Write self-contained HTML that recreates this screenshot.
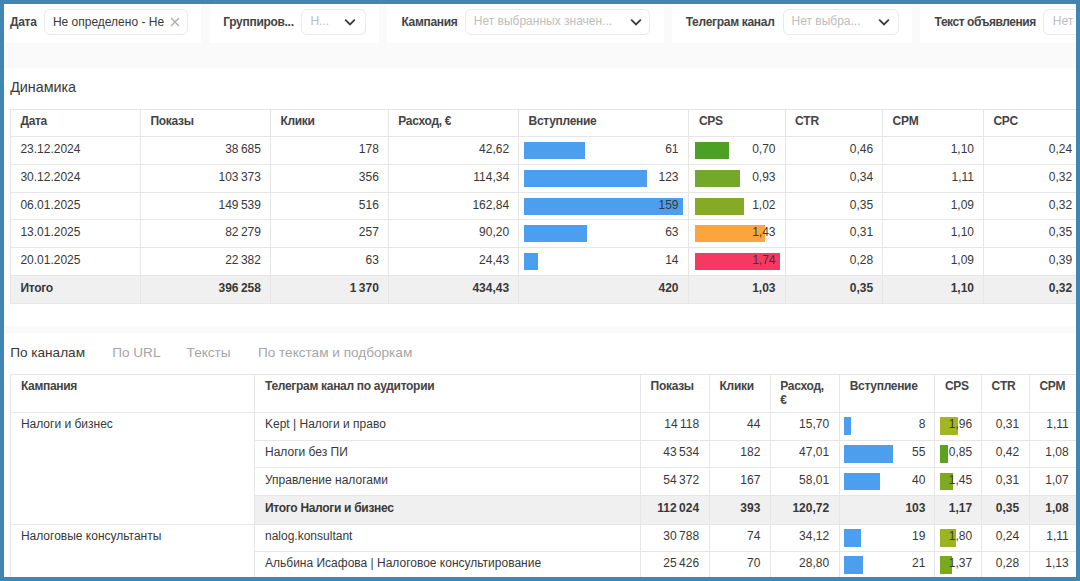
<!DOCTYPE html>
<html><head><meta charset="utf-8">
<style>
html,body{margin:0;padding:0;}
body{width:1080px;height:581px;overflow:hidden;background:#3f86b3;position:relative;font-family:"Liberation Sans",sans-serif;}
#in{position:absolute;left:0;top:0;width:1080px;height:581px;overflow:hidden;background:#fff;clip-path:inset(4px 4px 4px 4px);}
.t{position:absolute;white-space:nowrap;}
.r{position:absolute;}
svg.r{display:block;}
</style></head><body>
<div id="in">
<div class="r" style="left:0.00px;top:0.00px;width:1080.00px;height:68.00px;background:#fafafa;"></div>
<div class="r" style="left:0.00px;top:0.00px;width:201.00px;height:42.60px;background:#ffffff;"></div>
<div class="r" style="left:209.50px;top:0.00px;width:169.00px;height:42.60px;background:#ffffff;"></div>
<div class="r" style="left:387.00px;top:0.00px;width:277.30px;height:42.60px;background:#ffffff;"></div>
<div class="r" style="left:671.50px;top:0.00px;width:240.50px;height:42.60px;background:#ffffff;"></div>
<div class="r" style="left:920.00px;top:0.00px;width:160.00px;height:42.60px;background:#ffffff;"></div>
<div class="t " style="top:15.04px;font-size:12px;line-height:14px;font-weight:bold;letter-spacing:-0.3px;color:#444444;left:10.00px;">Дата</div>
<div class="r" style="left:44.30px;top:9.00px;width:143.60px;height:25.60px;background:#fff;border:1px solid #e9e9e9;border-radius:6px;box-sizing:border-box;"></div>
<div class="t " style="top:15.04px;font-size:12px;line-height:14px;color:#383838;left:52.90px;">Не определено - Не</div>
<div class="t " style="top:15.04px;font-size:12px;line-height:14px;font-weight:bold;letter-spacing:-0.3px;color:#444444;left:223.20px;">Группиров...</div>
<div class="r" style="left:301.40px;top:9.00px;width:64.30px;height:25.60px;background:#fff;border:1px solid #e9e9e9;border-radius:6px;box-sizing:border-box;"></div>
<div class="t " style="top:14.14px;font-size:12px;line-height:14px;color:#bdbdbd;left:310.40px;">Н...</div>
<div class="t " style="top:15.04px;font-size:12px;line-height:14px;font-weight:bold;letter-spacing:-0.3px;color:#444444;left:401.40px;">Кампания</div>
<div class="r" style="left:464.90px;top:9.00px;width:185.60px;height:25.60px;background:#fff;border:1px solid #e9e9e9;border-radius:6px;box-sizing:border-box;"></div>
<div class="t " style="top:14.14px;font-size:12px;line-height:14px;color:#bdbdbd;left:473.80px;">Нет выбранных значен...</div>
<div class="t " style="top:15.04px;font-size:12px;line-height:14px;font-weight:bold;letter-spacing:-0.3px;color:#444444;left:685.70px;">Телеграм канал</div>
<div class="r" style="left:782.60px;top:9.00px;width:116.10px;height:25.60px;background:#fff;border:1px solid #e9e9e9;border-radius:6px;box-sizing:border-box;"></div>
<div class="t " style="top:14.14px;font-size:12px;line-height:14px;color:#bdbdbd;left:791.50px;">Нет выбра...</div>
<div class="t " style="top:15.04px;font-size:12px;line-height:14px;font-weight:bold;letter-spacing:-0.3px;color:#444444;left:934.60px;letter-spacing:-0.45px;">Текст объявления</div>
<div class="r" style="left:1042.60px;top:9.00px;width:77.70px;height:25.60px;background:#fff;border:1px solid #e9e9e9;border-radius:6px;box-sizing:border-box;"></div>
<div class="t " style="top:14.14px;font-size:12px;line-height:14px;color:#bdbdbd;left:1052.80px;">Нет выбра...</div>
<svg class="r" style="left:169.1px;top:16.1px" width="12" height="12" viewBox="0 0 12 12"><path d="M2 2 L10 10 M10 2 L2 10" fill="none" stroke="#ababab" stroke-width="1.3"/></svg>
<svg class="r" style="left:344px;top:15.8px" width="12" height="12" viewBox="0 0 12 12"><path d="M1.2 3.6 L6 8.4 L10.8 3.6" fill="none" stroke="#3a3a3a" stroke-width="1.8"/></svg>
<svg class="r" style="left:629.7px;top:15.8px" width="12" height="12" viewBox="0 0 12 12"><path d="M1.2 3.6 L6 8.4 L10.8 3.6" fill="none" stroke="#3a3a3a" stroke-width="1.8"/></svg>
<svg class="r" style="left:878.4px;top:15.8px" width="12" height="12" viewBox="0 0 12 12"><path d="M1.2 3.6 L6 8.4 L10.8 3.6" fill="none" stroke="#3a3a3a" stroke-width="1.8"/></svg>
<div class="t " style="top:79.45px;font-size:14.3px;line-height:17px;color:#383838;left:10.20px;">Динамика</div>
<div class="r" style="left:10.40px;top:275.20px;width:1089.60px;height:28.00px;background:#f0f0f0;"></div>
<div class="r" style="left:10.40px;top:109.00px;width:1089.60px;height:1.00px;background:#e6e6e6;"></div>
<div class="r" style="left:10.40px;top:136.00px;width:1089.60px;height:1.00px;background:#e6e6e6;"></div>
<div class="r" style="left:10.40px;top:164.00px;width:1089.60px;height:1.00px;background:#e6e6e6;"></div>
<div class="r" style="left:10.40px;top:191.90px;width:1089.60px;height:1.00px;background:#e6e6e6;"></div>
<div class="r" style="left:10.40px;top:219.00px;width:1089.60px;height:1.00px;background:#e6e6e6;"></div>
<div class="r" style="left:10.40px;top:246.80px;width:1089.60px;height:1.00px;background:#e6e6e6;"></div>
<div class="r" style="left:10.40px;top:274.70px;width:1089.60px;height:1.00px;background:#e6e6e6;"></div>
<div class="r" style="left:10.40px;top:302.70px;width:1089.60px;height:1.00px;background:#e6e6e6;"></div>
<div class="r" style="left:9.90px;top:109.50px;width:1.00px;height:193.70px;background:#e6e6e6;"></div>
<div class="r" style="left:140.00px;top:109.50px;width:1.00px;height:193.70px;background:#e6e6e6;"></div>
<div class="r" style="left:269.90px;top:109.50px;width:1.00px;height:193.70px;background:#e6e6e6;"></div>
<div class="r" style="left:387.80px;top:109.50px;width:1.00px;height:193.70px;background:#e6e6e6;"></div>
<div class="r" style="left:518.10px;top:109.50px;width:1.00px;height:193.70px;background:#e6e6e6;"></div>
<div class="r" style="left:688.40px;top:109.50px;width:1.00px;height:193.70px;background:#e6e6e6;"></div>
<div class="r" style="left:784.50px;top:109.50px;width:1.00px;height:193.70px;background:#e6e6e6;"></div>
<div class="r" style="left:882.10px;top:109.50px;width:1.00px;height:193.70px;background:#e6e6e6;"></div>
<div class="r" style="left:983.00px;top:109.50px;width:1.00px;height:193.70px;background:#e6e6e6;"></div>
<div class="r" style="left:1082.00px;top:109.50px;width:1.00px;height:193.70px;background:#e6e6e6;"></div>
<div class="t " style="top:113.54px;font-size:12px;line-height:14px;font-weight:bold;letter-spacing:-0.3px;color:#444444;left:20.40px;">Дата</div>
<div class="t " style="top:113.54px;font-size:12px;line-height:14px;font-weight:bold;letter-spacing:-0.3px;color:#444444;left:150.50px;">Показы</div>
<div class="t " style="top:113.54px;font-size:12px;line-height:14px;font-weight:bold;letter-spacing:-0.3px;color:#444444;left:280.40px;">Клики</div>
<div class="t " style="top:113.54px;font-size:12px;line-height:14px;font-weight:bold;letter-spacing:-0.3px;color:#444444;left:398.30px;">Расход, €</div>
<div class="t " style="top:113.54px;font-size:12px;line-height:14px;font-weight:bold;letter-spacing:-0.3px;color:#444444;left:528.60px;">Вступление</div>
<div class="t " style="top:113.54px;font-size:12px;line-height:14px;font-weight:bold;letter-spacing:-0.3px;color:#444444;left:698.90px;">CPS</div>
<div class="t " style="top:113.54px;font-size:12px;line-height:14px;font-weight:bold;letter-spacing:-0.3px;color:#444444;left:795.00px;">CTR</div>
<div class="t " style="top:113.54px;font-size:12px;line-height:14px;font-weight:bold;letter-spacing:-0.3px;color:#444444;left:892.60px;">CPM</div>
<div class="t " style="top:113.54px;font-size:12px;line-height:14px;font-weight:bold;letter-spacing:-0.3px;color:#444444;left:993.50px;">CPC</div>
<div class="r" style="left:524.20px;top:141.70px;width:61.00px;height:17.20px;background:#4c9fee;"></div>
<div class="r" style="left:694.50px;top:141.70px;width:34.30px;height:17.20px;background:#4ca024;"></div>
<div class="t " style="top:142.04px;font-size:12px;line-height:14px;color:#383838;left:20.40px;">23.12.2024</div>
<div class="t " style="top:142.04px;font-size:12px;line-height:14px;color:#383838;right:819.10px;text-align:right;">38 685</div>
<div class="t " style="top:142.04px;font-size:12px;line-height:14px;color:#383838;right:701.20px;text-align:right;">178</div>
<div class="t " style="top:142.04px;font-size:12px;line-height:14px;color:#383838;right:570.90px;text-align:right;">42,62</div>
<div class="t " style="top:142.04px;font-size:12px;line-height:14px;color:#383838;right:401.50px;text-align:right;">61</div>
<div class="t " style="top:142.04px;font-size:12px;line-height:14px;color:#383838;right:304.50px;text-align:right;">0,70</div>
<div class="t " style="top:142.04px;font-size:12px;line-height:14px;color:#383838;right:206.90px;text-align:right;">0,46</div>
<div class="t " style="top:142.04px;font-size:12px;line-height:14px;color:#383838;right:106.00px;text-align:right;">1,10</div>
<div class="t " style="top:142.04px;font-size:12px;line-height:14px;color:#383838;right:7.90px;text-align:right;">0,24</div>
<div class="r" style="left:524.20px;top:169.70px;width:123.00px;height:17.20px;background:#4c9fee;"></div>
<div class="r" style="left:694.50px;top:169.70px;width:45.57px;height:17.20px;background:#74a82a;"></div>
<div class="t " style="top:170.04px;font-size:12px;line-height:14px;color:#383838;left:20.40px;">30.12.2024</div>
<div class="t " style="top:170.04px;font-size:12px;line-height:14px;color:#383838;right:819.10px;text-align:right;">103 373</div>
<div class="t " style="top:170.04px;font-size:12px;line-height:14px;color:#383838;right:701.20px;text-align:right;">356</div>
<div class="t " style="top:170.04px;font-size:12px;line-height:14px;color:#383838;right:570.90px;text-align:right;">114,34</div>
<div class="t " style="top:170.04px;font-size:12px;line-height:14px;color:#383838;right:401.50px;text-align:right;">123</div>
<div class="t " style="top:170.04px;font-size:12px;line-height:14px;color:#383838;right:304.50px;text-align:right;">0,93</div>
<div class="t " style="top:170.04px;font-size:12px;line-height:14px;color:#383838;right:206.90px;text-align:right;">0,34</div>
<div class="t " style="top:170.04px;font-size:12px;line-height:14px;color:#383838;right:106.00px;text-align:right;">1,11</div>
<div class="t " style="top:170.04px;font-size:12px;line-height:14px;color:#383838;right:7.90px;text-align:right;">0,32</div>
<div class="r" style="left:524.20px;top:197.60px;width:159.00px;height:17.20px;background:#4c9fee;"></div>
<div class="r" style="left:694.50px;top:197.60px;width:49.98px;height:17.20px;background:#84aa26;"></div>
<div class="t " style="top:197.94px;font-size:12px;line-height:14px;color:#383838;left:20.40px;">06.01.2025</div>
<div class="t " style="top:197.94px;font-size:12px;line-height:14px;color:#383838;right:819.10px;text-align:right;">149 539</div>
<div class="t " style="top:197.94px;font-size:12px;line-height:14px;color:#383838;right:701.20px;text-align:right;">516</div>
<div class="t " style="top:197.94px;font-size:12px;line-height:14px;color:#383838;right:570.90px;text-align:right;">162,84</div>
<div class="t " style="top:197.94px;font-size:12px;line-height:14px;color:#383838;right:401.50px;text-align:right;">159</div>
<div class="t " style="top:197.94px;font-size:12px;line-height:14px;color:#383838;right:304.50px;text-align:right;">1,02</div>
<div class="t " style="top:197.94px;font-size:12px;line-height:14px;color:#383838;right:206.90px;text-align:right;">0,35</div>
<div class="t " style="top:197.94px;font-size:12px;line-height:14px;color:#383838;right:106.00px;text-align:right;">1,09</div>
<div class="t " style="top:197.94px;font-size:12px;line-height:14px;color:#383838;right:7.90px;text-align:right;">0,32</div>
<div class="r" style="left:524.20px;top:224.70px;width:63.00px;height:17.20px;background:#4c9fee;"></div>
<div class="r" style="left:694.50px;top:224.70px;width:70.07px;height:17.20px;background:#fca53e;"></div>
<div class="t " style="top:225.04px;font-size:12px;line-height:14px;color:#383838;left:20.40px;">13.01.2025</div>
<div class="t " style="top:225.04px;font-size:12px;line-height:14px;color:#383838;right:819.10px;text-align:right;">82 279</div>
<div class="t " style="top:225.04px;font-size:12px;line-height:14px;color:#383838;right:701.20px;text-align:right;">257</div>
<div class="t " style="top:225.04px;font-size:12px;line-height:14px;color:#383838;right:570.90px;text-align:right;">90,20</div>
<div class="t " style="top:225.04px;font-size:12px;line-height:14px;color:#383838;right:401.50px;text-align:right;">63</div>
<div class="t " style="top:225.04px;font-size:12px;line-height:14px;color:#383838;right:304.50px;text-align:right;">1,43</div>
<div class="t " style="top:225.04px;font-size:12px;line-height:14px;color:#383838;right:206.90px;text-align:right;">0,31</div>
<div class="t " style="top:225.04px;font-size:12px;line-height:14px;color:#383838;right:106.00px;text-align:right;">1,10</div>
<div class="t " style="top:225.04px;font-size:12px;line-height:14px;color:#383838;right:7.90px;text-align:right;">0,35</div>
<div class="r" style="left:524.20px;top:252.50px;width:14.00px;height:17.20px;background:#4c9fee;"></div>
<div class="r" style="left:694.50px;top:252.50px;width:85.26px;height:17.20px;background:#f73862;"></div>
<div class="t " style="top:252.84px;font-size:12px;line-height:14px;color:#383838;left:20.40px;">20.01.2025</div>
<div class="t " style="top:252.84px;font-size:12px;line-height:14px;color:#383838;right:819.10px;text-align:right;">22 382</div>
<div class="t " style="top:252.84px;font-size:12px;line-height:14px;color:#383838;right:701.20px;text-align:right;">63</div>
<div class="t " style="top:252.84px;font-size:12px;line-height:14px;color:#383838;right:570.90px;text-align:right;">24,43</div>
<div class="t " style="top:252.84px;font-size:12px;line-height:14px;color:#383838;right:401.50px;text-align:right;">14</div>
<div class="t " style="top:252.84px;font-size:12px;line-height:14px;color:#383838;right:304.50px;text-align:right;">1,74</div>
<div class="t " style="top:252.84px;font-size:12px;line-height:14px;color:#383838;right:206.90px;text-align:right;">0,28</div>
<div class="t " style="top:252.84px;font-size:12px;line-height:14px;color:#383838;right:106.00px;text-align:right;">1,09</div>
<div class="t " style="top:252.84px;font-size:12px;line-height:14px;color:#383838;right:7.90px;text-align:right;">0,39</div>
<div class="t " style="top:280.74px;font-size:12px;line-height:14px;font-weight:bold;letter-spacing:-0.3px;color:#383838;left:20.40px;">Итого</div>
<div class="t " style="top:280.74px;font-size:12px;line-height:14px;font-weight:bold;color:#383838;right:819.10px;text-align:right;">396 258</div>
<div class="t " style="top:280.74px;font-size:12px;line-height:14px;font-weight:bold;color:#383838;right:701.20px;text-align:right;">1 370</div>
<div class="t " style="top:280.74px;font-size:12px;line-height:14px;font-weight:bold;color:#383838;right:570.90px;text-align:right;">434,43</div>
<div class="t " style="top:280.74px;font-size:12px;line-height:14px;font-weight:bold;color:#383838;right:401.50px;text-align:right;">420</div>
<div class="t " style="top:280.74px;font-size:12px;line-height:14px;font-weight:bold;color:#383838;right:304.50px;text-align:right;">1,03</div>
<div class="t " style="top:280.74px;font-size:12px;line-height:14px;font-weight:bold;color:#383838;right:206.90px;text-align:right;">0,35</div>
<div class="t " style="top:280.74px;font-size:12px;line-height:14px;font-weight:bold;color:#383838;right:106.00px;text-align:right;">1,10</div>
<div class="t " style="top:280.74px;font-size:12px;line-height:14px;font-weight:bold;color:#383838;right:7.90px;text-align:right;">0,32</div>
<div class="r" style="left:0.00px;top:325.70px;width:1080.00px;height:7.50px;background:#fafafa;"></div>
<div class="t " style="top:344.69px;font-size:13.6px;line-height:16px;color:#383838;left:10.20px;">По каналам</div>
<div class="t " style="top:344.69px;font-size:13.6px;line-height:16px;color:#a6a6a6;left:112.20px;">По URL</div>
<div class="t " style="top:344.69px;font-size:13.6px;line-height:16px;color:#a6a6a6;left:186.60px;">Тексты</div>
<div class="t " style="top:344.69px;font-size:13.6px;line-height:16px;color:#a6a6a6;left:257.90px;">По текстам и подборкам</div>
<div class="r" style="left:254.50px;top:495.30px;width:845.50px;height:29.00px;background:#f0f0f0;"></div>
<div class="r" style="left:10.40px;top:374.00px;width:1089.60px;height:1.00px;background:#e6e6e6;"></div>
<div class="r" style="left:10.40px;top:411.50px;width:1089.60px;height:1.00px;background:#e6e6e6;"></div>
<div class="r" style="left:254.50px;top:439.50px;width:845.50px;height:1.00px;background:#e6e6e6;"></div>
<div class="r" style="left:254.50px;top:467.00px;width:845.50px;height:1.00px;background:#e6e6e6;"></div>
<div class="r" style="left:254.50px;top:494.80px;width:845.50px;height:1.00px;background:#e6e6e6;"></div>
<div class="r" style="left:10.40px;top:523.80px;width:1089.60px;height:1.00px;background:#e6e6e6;"></div>
<div class="r" style="left:254.50px;top:551.10px;width:845.50px;height:1.00px;background:#e6e6e6;"></div>
<div class="r" style="left:254.50px;top:578.50px;width:845.50px;height:1.00px;background:#e6e6e6;"></div>
<div class="r" style="left:9.90px;top:374.50px;width:1.00px;height:225.50px;background:#e6e6e6;"></div>
<div class="r" style="left:254.00px;top:374.50px;width:1.00px;height:225.50px;background:#e6e6e6;"></div>
<div class="r" style="left:640.10px;top:374.50px;width:1.00px;height:225.50px;background:#e6e6e6;"></div>
<div class="r" style="left:708.90px;top:374.50px;width:1.00px;height:225.50px;background:#e6e6e6;"></div>
<div class="r" style="left:770.10px;top:374.50px;width:1.00px;height:225.50px;background:#e6e6e6;"></div>
<div class="r" style="left:838.90px;top:374.50px;width:1.00px;height:225.50px;background:#e6e6e6;"></div>
<div class="r" style="left:934.40px;top:374.50px;width:1.00px;height:225.50px;background:#e6e6e6;"></div>
<div class="r" style="left:981.10px;top:374.50px;width:1.00px;height:225.50px;background:#e6e6e6;"></div>
<div class="r" style="left:1029.00px;top:374.50px;width:1.00px;height:225.50px;background:#e6e6e6;"></div>
<div class="r" style="left:1078.50px;top:374.50px;width:1.00px;height:225.50px;background:#e6e6e6;"></div>
<div class="t " style="top:378.74px;font-size:12px;line-height:14px;font-weight:bold;letter-spacing:-0.3px;color:#444444;left:20.90px;">Кампания</div>
<div class="t " style="top:378.74px;font-size:12px;line-height:14px;font-weight:bold;letter-spacing:-0.3px;color:#444444;left:265.00px;">Телеграм канал по аудитории</div>
<div class="t " style="top:378.74px;font-size:12px;line-height:14px;font-weight:bold;letter-spacing:-0.3px;color:#444444;left:650.60px;">Показы</div>
<div class="t " style="top:378.74px;font-size:12px;line-height:14px;font-weight:bold;letter-spacing:-0.3px;color:#444444;left:719.60px;">Клики</div>
<div class="t " style="top:378.74px;font-size:12px;line-height:14px;font-weight:bold;letter-spacing:-0.3px;color:#444444;left:780.30px;">Расход,</div>
<div class="t " style="top:378.74px;font-size:12px;line-height:14px;font-weight:bold;letter-spacing:-0.3px;color:#444444;left:849.70px;">Вступление</div>
<div class="t " style="top:378.74px;font-size:12px;line-height:14px;font-weight:bold;letter-spacing:-0.3px;color:#444444;left:945.00px;">CPS</div>
<div class="t " style="top:378.74px;font-size:12px;line-height:14px;font-weight:bold;letter-spacing:-0.3px;color:#444444;left:991.60px;">CTR</div>
<div class="t " style="top:378.74px;font-size:12px;line-height:14px;font-weight:bold;letter-spacing:-0.3px;color:#444444;left:1039.50px;">CPM</div>
<div class="t " style="top:392.84px;font-size:12px;line-height:14px;font-weight:bold;letter-spacing:-0.3px;color:#444444;left:780.30px;">€</div>
<div class="t " style="top:417.04px;font-size:12px;line-height:14px;color:#383838;left:20.90px;">Налоги и бизнес</div>
<div class="t " style="top:528.54px;font-size:12px;line-height:14px;color:#383838;left:20.90px;">Налоговые консультанты</div>
<div class="r" style="left:844.40px;top:417.00px;width:7.04px;height:17.50px;background:#4c9fee;"></div>
<div class="r" style="left:940.00px;top:417.00px;width:17.64px;height:17.50px;background:#a3b524;"></div>
<div class="t " style="top:417.04px;font-size:12px;line-height:14px;color:#383838;left:265.00px;">Kept | Налоги и право</div>
<div class="t " style="top:417.04px;font-size:12px;line-height:14px;color:#383838;right:380.90px;text-align:right;">14 118</div>
<div class="t " style="top:417.04px;font-size:12px;line-height:14px;color:#383838;right:319.70px;text-align:right;">44</div>
<div class="t " style="top:417.04px;font-size:12px;line-height:14px;color:#383838;right:250.90px;text-align:right;">15,70</div>
<div class="t " style="top:417.04px;font-size:12px;line-height:14px;color:#383838;right:154.60px;text-align:right;">8</div>
<div class="t " style="top:417.04px;font-size:12px;line-height:14px;color:#383838;right:107.90px;text-align:right;">1,96</div>
<div class="t " style="top:417.04px;font-size:12px;line-height:14px;color:#383838;right:60.80px;text-align:right;">0,31</div>
<div class="t " style="top:417.04px;font-size:12px;line-height:14px;color:#383838;right:11.30px;text-align:right;">1,11</div>
<div class="r" style="left:844.40px;top:445.00px;width:48.40px;height:17.50px;background:#4c9fee;"></div>
<div class="r" style="left:940.00px;top:445.00px;width:7.65px;height:17.50px;background:#5ba21e;"></div>
<div class="t " style="top:444.84px;font-size:12px;line-height:14px;color:#383838;left:265.00px;">Налоги без ПИ</div>
<div class="t " style="top:444.84px;font-size:12px;line-height:14px;color:#383838;right:380.90px;text-align:right;">43 534</div>
<div class="t " style="top:444.84px;font-size:12px;line-height:14px;color:#383838;right:319.70px;text-align:right;">182</div>
<div class="t " style="top:444.84px;font-size:12px;line-height:14px;color:#383838;right:250.90px;text-align:right;">47,01</div>
<div class="t " style="top:444.84px;font-size:12px;line-height:14px;color:#383838;right:154.60px;text-align:right;">55</div>
<div class="t " style="top:444.84px;font-size:12px;line-height:14px;color:#383838;right:107.90px;text-align:right;">0,85</div>
<div class="t " style="top:444.84px;font-size:12px;line-height:14px;color:#383838;right:60.80px;text-align:right;">0,42</div>
<div class="t " style="top:444.84px;font-size:12px;line-height:14px;color:#383838;right:11.30px;text-align:right;">1,08</div>
<div class="r" style="left:844.40px;top:472.50px;width:35.20px;height:17.50px;background:#4c9fee;"></div>
<div class="r" style="left:940.00px;top:472.50px;width:13.05px;height:17.50px;background:#7fa91f;"></div>
<div class="t " style="top:472.74px;font-size:12px;line-height:14px;color:#383838;left:265.00px;">Управление налогами</div>
<div class="t " style="top:472.74px;font-size:12px;line-height:14px;color:#383838;right:380.90px;text-align:right;">54 372</div>
<div class="t " style="top:472.74px;font-size:12px;line-height:14px;color:#383838;right:319.70px;text-align:right;">167</div>
<div class="t " style="top:472.74px;font-size:12px;line-height:14px;color:#383838;right:250.90px;text-align:right;">58,01</div>
<div class="t " style="top:472.74px;font-size:12px;line-height:14px;color:#383838;right:154.60px;text-align:right;">40</div>
<div class="t " style="top:472.74px;font-size:12px;line-height:14px;color:#383838;right:107.90px;text-align:right;">1,45</div>
<div class="t " style="top:472.74px;font-size:12px;line-height:14px;color:#383838;right:60.80px;text-align:right;">0,31</div>
<div class="t " style="top:472.74px;font-size:12px;line-height:14px;color:#383838;right:11.30px;text-align:right;">1,07</div>
<div class="t " style="top:500.74px;font-size:12px;line-height:14px;font-weight:bold;letter-spacing:-0.3px;color:#383838;left:265.00px;">Итого Налоги и бизнес</div>
<div class="t " style="top:500.74px;font-size:12px;line-height:14px;font-weight:bold;color:#383838;right:380.90px;text-align:right;">112 024</div>
<div class="t " style="top:500.74px;font-size:12px;line-height:14px;font-weight:bold;color:#383838;right:319.70px;text-align:right;">393</div>
<div class="t " style="top:500.74px;font-size:12px;line-height:14px;font-weight:bold;color:#383838;right:250.90px;text-align:right;">120,72</div>
<div class="t " style="top:500.74px;font-size:12px;line-height:14px;font-weight:bold;color:#383838;right:154.60px;text-align:right;">103</div>
<div class="t " style="top:500.74px;font-size:12px;line-height:14px;font-weight:bold;color:#383838;right:107.90px;text-align:right;">1,17</div>
<div class="t " style="top:500.74px;font-size:12px;line-height:14px;font-weight:bold;color:#383838;right:60.80px;text-align:right;">0,35</div>
<div class="t " style="top:500.74px;font-size:12px;line-height:14px;font-weight:bold;color:#383838;right:11.30px;text-align:right;">1,08</div>
<div class="r" style="left:844.40px;top:529.00px;width:16.72px;height:17.50px;background:#4c9fee;"></div>
<div class="r" style="left:940.00px;top:529.00px;width:16.20px;height:17.50px;background:#9cb324;"></div>
<div class="t " style="top:528.54px;font-size:12px;line-height:14px;color:#383838;left:265.00px;">nalog.konsultant</div>
<div class="t " style="top:528.54px;font-size:12px;line-height:14px;color:#383838;right:380.90px;text-align:right;">30 788</div>
<div class="t " style="top:528.54px;font-size:12px;line-height:14px;color:#383838;right:319.70px;text-align:right;">74</div>
<div class="t " style="top:528.54px;font-size:12px;line-height:14px;color:#383838;right:250.90px;text-align:right;">34,12</div>
<div class="t " style="top:528.54px;font-size:12px;line-height:14px;color:#383838;right:154.60px;text-align:right;">19</div>
<div class="t " style="top:528.54px;font-size:12px;line-height:14px;color:#383838;right:107.90px;text-align:right;">1,80</div>
<div class="t " style="top:528.54px;font-size:12px;line-height:14px;color:#383838;right:60.80px;text-align:right;">0,24</div>
<div class="t " style="top:528.54px;font-size:12px;line-height:14px;color:#383838;right:11.30px;text-align:right;">1,11</div>
<div class="r" style="left:844.40px;top:556.30px;width:18.48px;height:17.50px;background:#4c9fee;"></div>
<div class="r" style="left:940.00px;top:556.30px;width:12.33px;height:17.50px;background:#7ba91e;"></div>
<div class="t " style="top:556.34px;font-size:12px;line-height:14px;color:#383838;left:265.00px;">Альбина Исафова | Налоговое консультирование</div>
<div class="t " style="top:556.34px;font-size:12px;line-height:14px;color:#383838;right:380.90px;text-align:right;">25 426</div>
<div class="t " style="top:556.34px;font-size:12px;line-height:14px;color:#383838;right:319.70px;text-align:right;">70</div>
<div class="t " style="top:556.34px;font-size:12px;line-height:14px;color:#383838;right:250.90px;text-align:right;">28,80</div>
<div class="t " style="top:556.34px;font-size:12px;line-height:14px;color:#383838;right:154.60px;text-align:right;">21</div>
<div class="t " style="top:556.34px;font-size:12px;line-height:14px;color:#383838;right:107.90px;text-align:right;">1,37</div>
<div class="t " style="top:556.34px;font-size:12px;line-height:14px;color:#383838;right:60.80px;text-align:right;">0,28</div>
<div class="t " style="top:556.34px;font-size:12px;line-height:14px;color:#383838;right:11.30px;text-align:right;">1,13</div>
</div>
</body></html>
